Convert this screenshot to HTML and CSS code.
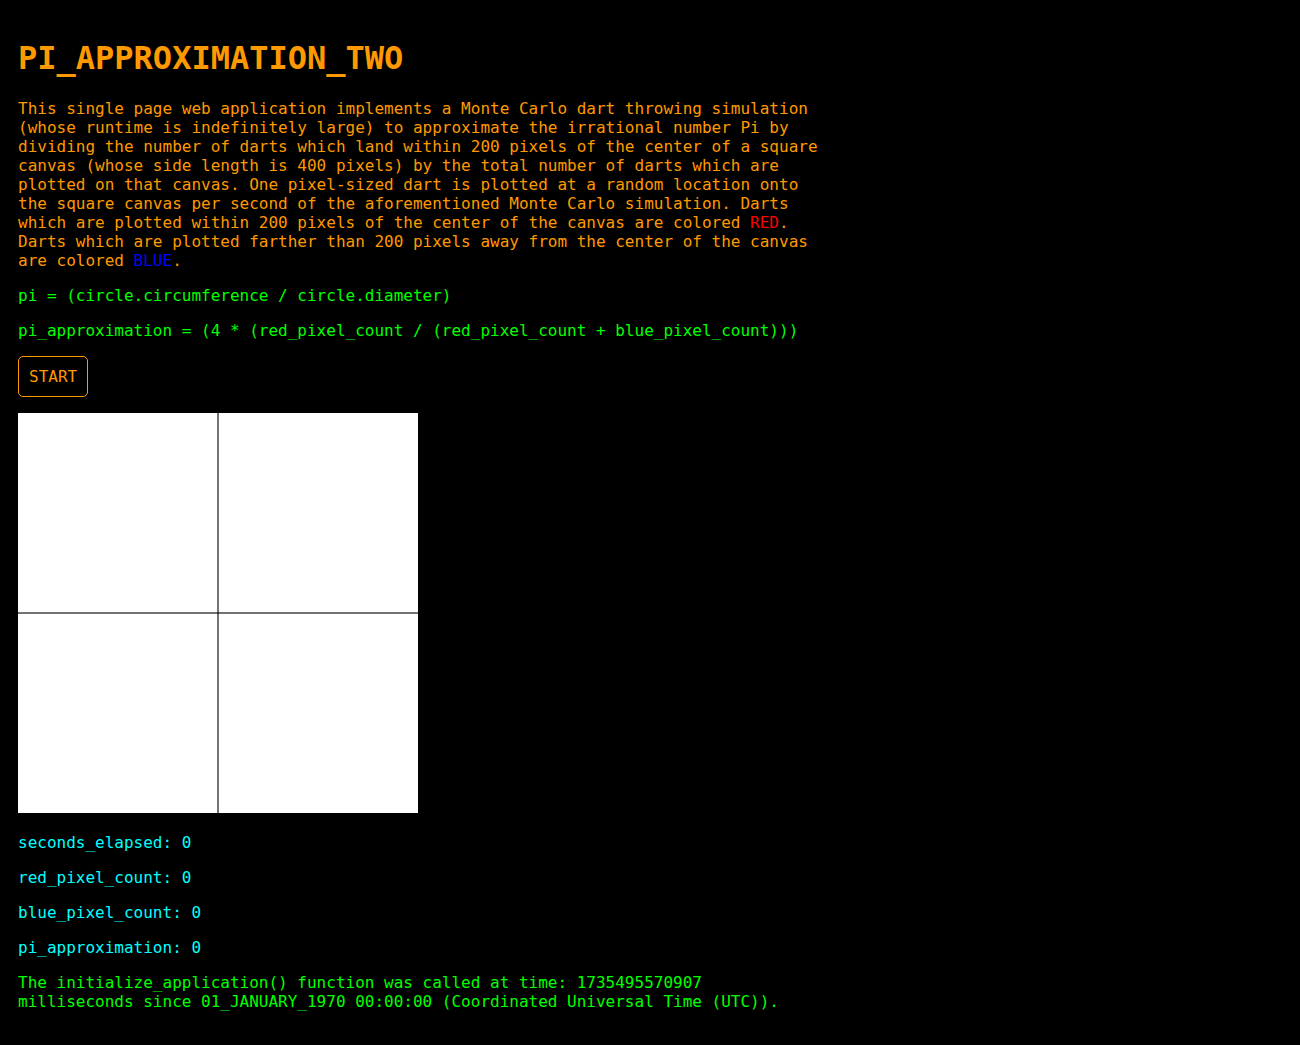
FILE: index.html
```html
<!DOCTYPE html>
<html>
<head>
<meta charset="utf-8">
<title>PI_APPROXIMATION_TWO</title>
<link rel="stylesheet" href="styles.css">
</head>
<body>
<h1 class="title">PI_APPROXIMATION_TWO</h1>
<p class="orange">This single page web application implements a Monte Carlo dart throwing simulation<br>(whose runtime is indefinitely large) to approximate the irrational number Pi by<br>dividing the number of darts which land within 200 pixels of the center of a square<br>canvas (whose side length is 400 pixels) by the total number of darts which are<br>plotted on that canvas. One pixel-sized dart is plotted at a random location onto<br>the square canvas per second of the aforementioned Monte Carlo simulation. Darts<br>which are plotted within 200 pixels of the center of the canvas are colored <span class="red">RED</span>.<br>Darts which are plotted farther than 200 pixels away from the center of the canvas<br>are colored <span class="blue">BLUE</span>.</p>
<p class="green">pi = (circle.circumference / circle.diameter)</p>
<p class="green">pi_approximation = (4 * (red_pixel_count / (red_pixel_count + blue_pixel_count)))</p>
<p class="button-row"><button class="start">START</button></p>
<div class="canvas-wrap"><svg class="canvas" width="400" height="400" viewBox="0 0 400 400"><rect width="400" height="400" fill="#fff"/><line x1="200" y1="0" x2="200" y2="400" stroke="rgba(0,0,0,0.55)" stroke-width="2"/><line x1="0" y1="200" x2="400" y2="200" stroke="rgba(0,0,0,0.55)" stroke-width="2"/></svg></div>
<p class="cyan">seconds_elapsed: 0</p>
<p class="cyan">red_pixel_count: 0</p>
<p class="cyan">blue_pixel_count: 0</p>
<p class="cyan">pi_approximation: 0</p>
<p class="green">The initialize_application() function was called at time: 1735495570907<br>milliseconds since 01_JANUARY_1970 00:00:00 (Coordinated Universal Time (UTC)).</p>
</body>
</html>
```
FILE: styles.css
```css
html {
  background: #000;
}
body {
  margin: 8px;
  padding: 10px;
  background: #000;
  font-family: "DejaVu Sans Mono", monospace;
  font-size: 16px;
}
.title {
  color: #ff9900;
  font-size: 32px;
  font-weight: bold;
  margin: 21.44px 0;
}
p {
  margin: 16px 0;
}
.orange {
  color: #ff9900;
}
.red {
  color: #ff0000;
}
.blue {
  color: #0000ff;
}
.green {
  color: #00ff00;
}
.cyan {
  color: #00ffff;
}
.start {
  font-family: "DejaVu Sans Mono", monospace;
  font-size: 16px;
  color: #ff9900;
  background: #000;
  border: 1px solid #ff9900;
  border-radius: 5px;
  padding: 10px;
  line-height: 19px;
  cursor: pointer;
}
.canvas-wrap {
  margin: 0;
}
.canvas {
  display: inline-block;
  vertical-align: baseline;
}
```
